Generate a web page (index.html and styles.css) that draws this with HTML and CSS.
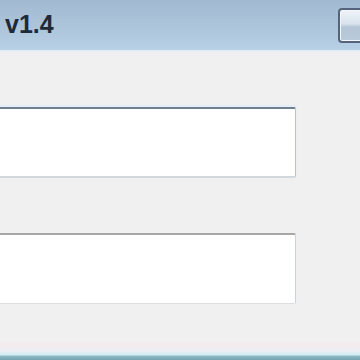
FILE: index.html
```html
<!DOCTYPE html>
<html>
<head>
<meta charset="utf-8">
<link rel="stylesheet" href="styles.css">
</head>
<body>
<div class="window">
  <div class="titlebar">
    <span class="title">v1.4</span>
    <span class="caption-btn"></span>
  </div>
  <div class="content">
    <div class="field field-focus"></div>
    <div class="field"></div>
  </div>
  <div class="frame-bottom"></div>
</div>
</body>
</html>
```
FILE: styles.css
```css
html, body {
  margin: 0;
  padding: 0;
  width: 360px;
  height: 360px;
  overflow: hidden;
  background: #f0f0f0;
}
.window {
  display: flex;
  flex-direction: column;
  height: 360px;
  overflow: hidden;
}
.titlebar {
  height: 50px;
  flex: none;
  display: flex;
  align-items: flex-start;
  justify-content: space-between;
  background: linear-gradient(#a1bad1 0%, #abc4da 50%, #b7d0e5 100%);
  border-bottom: 2px solid #e4ebf2;
}
.title {
  margin-left: 5px;
  margin-top: 9px;
  font-family: "Liberation Sans", Arial, sans-serif;
  font-size: 25px;
  font-weight: bold;
  line-height: 30px;
  color: #1f2a38;
}
.caption-btn {
  margin-top: 8px;
  margin-right: -10px;
  width: 28px;
  height: 31px;
  border: 2px solid #55647a;
  border-radius: 4px;
  background: linear-gradient(#eef3f8 0%, #d9e3ed 45%, #b4c5d6 55%, #b9cadb 100%);
  box-shadow: inset 0 0 0 1px #f4f7fa;
}
.content {
  display: flex;
  flex-direction: column;
  gap: 55px;
  padding-top: 55px;
}
.field {
  margin-left: -10px;
  width: 304px;
  height: 68px;
  background: #ffffff;
  border: 1px solid #cdd3d9;
  border-top: 2px solid #a7a7a7;
  border-bottom-color: #dcdfe2;
  border-radius: 2px;
}
.field-focus {
  height: 67px;
  border-top: 2px solid #6f808f;
  border-left-color: #b9c3cd;
  border-right-color: #b9c3cd;
  border-bottom: 2px solid #d3d8dd;
  box-shadow: 0 -2px 2px #e3edf8;
}
.frame-bottom {
  margin-top: auto;
  height: 17px;
  flex: none;
  background: linear-gradient(#f3ebee 0px, #f3ebee 4px, #ebeff3 5px, #ebeff3 9px, #d6edf3 10px, #d6edf3 12px, #8fbac5 13px, #74a5b2 17px);
}
```
